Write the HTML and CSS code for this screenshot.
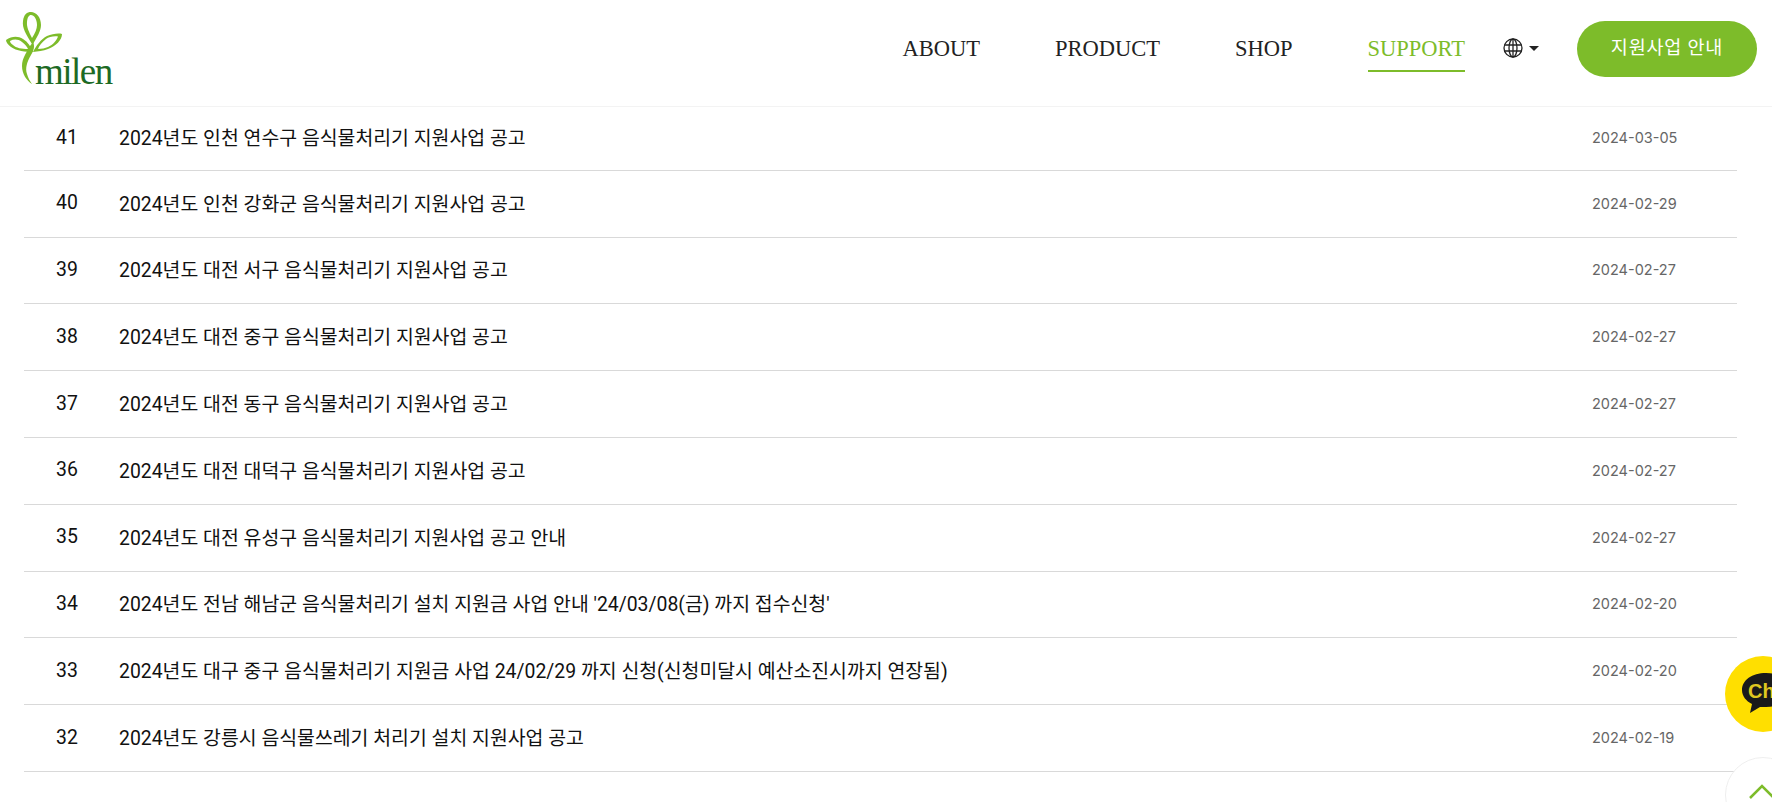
FILE: index.html
```html
<!DOCTYPE html>
<html lang="ko">
<head>
<meta charset="utf-8">
<title>milen 지원사업</title>
<link rel="stylesheet" href="styles.css">
</head>
<body>
<header class="header">
  <a class="logo" href="#">
    <svg class="logo-mark" width="66" height="88" viewBox="0 0 66 88">
      <g fill="#7dbc2a" fill-rule="evenodd">
        <path d="M32 44C26 34 22 28 23 21C24 14 27 12 31 12C36 12 41 17 41 25C41 31 37 37 33 44ZM32 38C29 32 26.500 27 27 22C27.500 17 29 15 31 15C34 15 37 19 37 25C37 29 35 33 32 38Z"/>
        <path d="M6 40C12 36 18 36 23 39C28 42 31 47 33 52C26 52 16 51 11 47C8 45 6 42 6 40ZM10 41C14 39 18 39 22 42C25 44 27 47 28 49C22 49 16 48 13 45C11 44 10 42 10 41Z"/>
        <path d="M62 34C62 40 56 46 48 49C43 51 38 51 33 52C36 46 41 39 47 36C52 34 58 33 62 34ZM58 36.500C53 36 49 37 46 39C42 42 39 46 38 49C42 49 45 48 48 47C53 45 57 40 58 36.500Z"/>
        <path d="M33 42C35 46 34 50 31 55C27 62 25 68 27 74C28 78 30 81 32 84C27 81 22 74 22 66C22 58 27 52 30 46Z"/>
      </g>
    </svg>
    <span class="logo-text">milen</span>
  </a>
  <nav class="nav">
    <a class="nav-item" href="#">ABOUT</a>
    <a class="nav-item" href="#">PRODUCT</a>
    <a class="nav-item" href="#">SHOP</a>
    <a class="nav-item is-active" href="#">SUPPORT</a>
  </nav>
  <div class="lang">
    <svg width="20" height="20" viewBox="0 0 20 20" fill="none" stroke="#222" stroke-width="1.300">
      <circle cx="10" cy="10" r="9"/>
      <ellipse cx="10" cy="10" rx="4" ry="9"/>
      <path d="M10 1V19M1.500 7H18.500M1.500 13H18.500"/>
    </svg>
    <span class="caret"></span>
  </div>
  <a class="cta" href="#">지원사업 안내</a>
</header>
<main class="board">
  <div class="row"><span class="num">41</span><a class="title" href="#">2024년도 인천 연수구 음식물처리기 지원사업 공고</a><span class="date">2024-03-05</span></div>
  <div class="row"><span class="num">40</span><a class="title" href="#">2024년도 인천 강화군 음식물처리기 지원사업 공고</a><span class="date">2024-02-29</span></div>
  <div class="row"><span class="num">39</span><a class="title" href="#">2024년도 대전 서구 음식물처리기 지원사업 공고</a><span class="date">2024-02-27</span></div>
  <div class="row"><span class="num">38</span><a class="title" href="#">2024년도 대전 중구 음식물처리기 지원사업 공고</a><span class="date">2024-02-27</span></div>
  <div class="row"><span class="num">37</span><a class="title" href="#">2024년도 대전 동구 음식물처리기 지원사업 공고</a><span class="date">2024-02-27</span></div>
  <div class="row"><span class="num">36</span><a class="title" href="#">2024년도 대전 대덕구 음식물처리기 지원사업 공고</a><span class="date">2024-02-27</span></div>
  <div class="row"><span class="num">35</span><a class="title" href="#">2024년도 대전 유성구 음식물처리기 지원사업 공고 안내</a><span class="date">2024-02-27</span></div>
  <div class="row"><span class="num">34</span><a class="title" href="#">2024년도 전남 해남군 음식물처리기 설치 지원금 사업 안내 '24/03/08(금) 까지 접수신청'</a><span class="date">2024-02-20</span></div>
  <div class="row"><span class="num">33</span><a class="title" href="#">2024년도 대구 중구 음식물처리기 지원금 사업 24/02/29 까지 신청(신청미달시 예산소진시까지 연장됨)</a><span class="date">2024-02-20</span></div>
  <div class="row"><span class="num">32</span><a class="title" href="#">2024년도 강릉시 음식물쓰레기 처리기 설치 지원사업 공고</a><span class="date">2024-02-19</span></div>
</main>
<a class="chat" href="#">
  <svg width="48" height="42" viewBox="0 0 48 42">
    <path fill="#1a1a1a" d="M24 0C10 0 0 7 0 17C0 23 4 28 10 31L8 40L18 34C20 34 22 34 24 34C38 34 48 27 48 17C48 7 38 0 24 0Z"/>
  </svg>
  <span class="chat-text">Ch</span>
</a>
<a class="top" href="#">
  <svg width="26" height="15" viewBox="0 0 26 15" fill="none" stroke="#7dbc2a" stroke-width="2.500">
    <path d="M1 14L13 2L25 14"/>
  </svg>
</a>
</body>
</html>
```

FILE: styles.css
```css
* { box-sizing: border-box; }
html, body { margin: 0; padding: 0; height: 802px; overflow: hidden; background: #fff; }
body { font-family: Roboto, "Noto Sans CJK KR", sans-serif; color: #111; }
a { color: inherit; text-decoration: none; }

.header {
  height: 107px;
  display: flex;
  align-items: flex-start;
  padding: 21px 15px 0 0;
  border-bottom: 1px solid #f3f3f3;
}
.logo { position: relative; display: block; width: 125px; height: 86px; margin-top: -21px; }
.logo-mark { position: absolute; left: 0; top: 0; }
.logo-text {
  position: absolute;
  left: 35px;
  top: 49px;
  font: 37px/46px "Liberation Serif", serif;
  letter-spacing: -1.500px;
  color: #1d6a24;
}
.nav { display: flex; gap: 75px; margin-left: auto; height: 51px; }
.nav-item {
  font: 22.500px/50px "Liberation Serif", serif;
  color: #222;
  height: 51px;
  padding-top: 3px;
  white-space: nowrap;
}
.is-active { color: #7dbc2a; border-bottom: 2px solid #7dbc2a; }
.lang { display: flex; align-items: center; gap: 6px; margin: 16px 38px 0 38px; height: 22px; }
.caret { width: 0; height: 0; border: 5px solid transparent; border-top: 5px solid #222; border-bottom: 0; }
.cta {
  width: 180px;
  height: 56px;
  border-radius: 28px;
  background: #7dbc2a;
  color: #fff;
  font-size: 18.500px;
  letter-spacing: 0.800px;
  line-height: 54px;
  text-align: center;
}

.board { margin: 0 35px 0 24px; }
.row {
  height: 66.800px;
  display: flex;
  align-items: center;
  border-bottom: 1px solid #d9d9d9;
  font-size: 19.400px;
}
.row:first-child { height: 63.800px; }
.num { width: 86px; text-align: center; flex: none; padding-bottom: 2px; margin-right: 9px; }
.title { flex: 1; color: #111; white-space: nowrap; padding-bottom: 3px; }
.date { width: 146px; flex: none; font: 14.500px Inter, sans-serif; color: #666; padding-left: 1px; padding-bottom: 1px; }

.chat {
  position: fixed;
  left: 1725px;
  top: 656px;
  width: 76px;
  height: 76px;
  border-radius: 50%;
  background: #ffdf00;
}
.chat svg { position: absolute; left: 17px; top: 17px; }
.chat-text {
  position: absolute;
  left: 23px;
  top: 20px;
  font: 700 20px/30px "Liberation Sans", sans-serif;
  color: #e0c820;
}
.top {
  position: fixed;
  left: 1725px;
  top: 757px;
  width: 76px;
  height: 76px;
  border-radius: 50%;
  background: #fff;
  border: 1px solid #eee;
}
.top svg { position: absolute; left: 23px; top: 26px; }
```
